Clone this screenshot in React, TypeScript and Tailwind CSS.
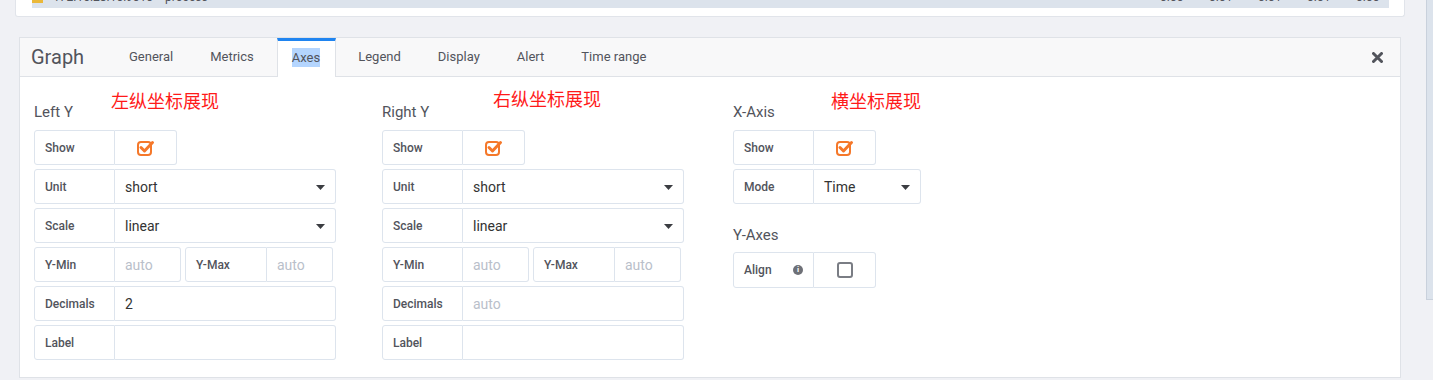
import React from "react";

const FONT = { fontFamily: "Roboto, 'Noto Sans CJK SC', sans-serif" };

function Check() {
  return (
    <svg width="20" height="18" viewBox="0 0 20 18">
      <rect x="2" y="3" width="13" height="13" rx="3" fill="none" stroke="#f5782a" strokeWidth="2" />
      <path d="M5 8.5 L8.5 12 L16.5 3.5" fill="none" stroke="#f5782a" strokeWidth="3" strokeLinecap="round" strokeLinejoin="round" />
    </svg>
  );
}

function Caret() {
  return (
    <svg width="9" height="5" viewBox="0 0 9 5">
      <path d="M0 0 L9 0 L4.5 5 Z" fill="#3b3d42" />
    </svg>
  );
}

function Label({ children, w = "w-[81px]" }: { children: React.ReactNode; w?: string }) {
  return (
    <div className={`${w} h-full shrink-0 border border-[#dde4ed] rounded-l-[3px] flex items-center pl-[10px] text-[12px] font-medium text-[#52545c]`}>
      {children}
    </div>
  );
}

function ShowRow() {
  return (
    <div className="flex h-[35px] w-[143px] mb-[4px]">
      <Label>Show</Label>
      <div className="flex-1 h-full border-y border-r border-[#dde4ed] rounded-r-[3px] flex items-center justify-center">
        <Check />
      </div>
    </div>
  );
}

function SelectRow({ label, value, w }: { label: string; value: string; w: string }) {
  return (
    <div className={`flex h-[35px] ${w} mb-[4px]`}>
      <Label>{label}</Label>
      <div className="flex-1 h-full border-y border-r border-[#dde4ed] rounded-r-[3px] flex items-center pl-[10px] pr-[10px] pt-[1px] justify-between text-[14px] text-[#333]">
        <span>{value}</span>
        <Caret />
      </div>
    </div>
  );
}

function InputRow({ label, value, placeholder }: { label: string; value?: string; placeholder?: string }) {
  return (
    <div className="flex h-[35px] w-[302px] mb-[4px]">
      <Label>{label}</Label>
      <div className="flex-1 h-full border-y border-r border-[#dde4ed] rounded-r-[3px] flex items-center pl-[10px] pt-[1px] text-[14px]">
        {value ? <span className="text-[#333]">{value}</span> : placeholder ? <span className="text-[#b9c0ca]">{placeholder}</span> : null}
      </div>
    </div>
  );
}

function MinMaxRow() {
  return (
    <div className="flex h-[35px] w-[302px] mb-[4px] gap-[4px]">
      <div className="flex h-full w-[147px]">
        <Label>Y-Min</Label>
        <div className="flex-1 h-full border-y border-r border-[#dde4ed] rounded-r-[3px] flex items-center pl-[10px] pt-[1px] text-[14px] text-[#b9c0ca]">auto</div>
      </div>
      <div className="flex h-full w-[148px]">
        <Label w="w-[82px]">Y-Max</Label>
        <div className="flex-1 h-full border-y border-r border-[#dde4ed] rounded-r-[3px] flex items-center pl-[10px] pt-[1px] text-[14px] text-[#b9c0ca]">auto</div>
      </div>
    </div>
  );
}

function Heading({ title, note, w, noteMt }: { title: string; note: string; w: string; noteMt: string }) {
  return (
    <div className="flex h-[53px]">
      <div className={`${w} shrink-0 pt-[26px] text-[15px] leading-[18px] text-[#52545c]`}>{title}</div>
      <div className={`${noteMt} text-[18px] leading-[24px] text-[#ff1a1a]`}>{note}</div>
    </div>
  );
}

export default function App() {
  const tabs = ["General", "Metrics", "Axes", "Legend", "Display", "Alert", "Time range"];
  return (
    <div style={FONT} className="w-[1433px] h-[380px] bg-[#f0f1f5] overflow-hidden flex">
      <div className="w-[1426px] shrink-0">
        {/* top panel remnant */}
        <div className="ml-[15px] w-[1390px] h-[17px] bg-white border-b border-x border-[#e1e4ea] rounded-b-[3px] overflow-hidden">
          <div className="mt-[-14px] ml-[16px] w-[1357px] h-[22px] bg-[#dce3ec] flex items-center text-[12px] leading-[14px] text-[#52545c]">
            <span className="w-[11px] h-[11px] bg-[#eab839] mr-[10px]" />
            <span className="mr-[12px]">172.16.28.10:9010</span>
            <span>process</span>
            <div className="flex-1" />
            <span className="w-[49px]">0.00</span>
            <span className="w-[49px]">0.01</span>
            <span className="w-[49px]">0.01</span>
            <span className="w-[49px]">0.01</span>
            <span className="w-[33px]">0.00</span>
          </div>
        </div>

        {/* editor */}
        <div className="mt-[20px] ml-[19px] w-[1382px] border border-[#dfe2e7] bg-white">
          <div className="h-[39px] bg-[#f8f8f9] border-b border-[#dfe2e7] flex items-end pl-[11px] pr-[17px]">
            <div className="self-center text-[20px] text-[#52545c] w-[83px]">Graph</div>
            <div className="flex gap-[7px] h-full items-end">
              {tabs.map((t) =>
                t === "Axes" ? (
                  <div key={t} className="h-[39px] mb-[-1px] ml-[1px] bg-white border-x border-[#dfe2e7] border-t-[3px] border-t-[#1f84f0] pl-[14px] pr-[15px] pb-[3px] flex items-center text-[13px] text-[#52545c]">
                    <span className="bg-[#b4d5fe] leading-[19px]">{t}</span>
                  </div>
                ) : (
                  <div key={t} className="h-[39px] border-x border-transparent px-[14px] flex items-center text-[13px] text-[#52545c]">
                    {t}
                  </div>
                )
              )}
            </div>
            <div className="flex-1" />
            <div className="self-center">
              <svg width="11" height="11" viewBox="0 0 11 11">
                <path d="M1.5 1.5 L9.5 9.5 M9.5 1.5 L1.5 9.5" stroke="#52545c" strokeWidth="3" strokeLinecap="round" />
              </svg>
            </div>
          </div>

          <div className="flex pl-[14px] pb-[13px]">
            <div className="w-[348px]">
              <Heading title="Left Y" note="左纵坐标展现" w="w-[77px]" noteMt="mt-[13px]" />
              <ShowRow />
              <SelectRow label="Unit" value="short" w="w-[302px]" />
              <SelectRow label="Scale" value="linear" w="w-[302px]" />
              <MinMaxRow />
              <InputRow label="Decimals" value="2" />
              <InputRow label="Label" />
            </div>
            <div className="w-[351px]">
              <Heading title="Right Y" note="右纵坐标展现" w="w-[111px]" noteMt="mt-[11px]" />
              <ShowRow />
              <SelectRow label="Unit" value="short" w="w-[302px]" />
              <SelectRow label="Scale" value="linear" w="w-[302px]" />
              <MinMaxRow />
              <InputRow label="Decimals" placeholder="auto" />
              <InputRow label="Label" />
            </div>
            <div className="flex-1">
              <Heading title="X-Axis" note="横坐标展现" w="w-[98px]" noteMt="mt-[13px]" />
              <ShowRow />
              <SelectRow label="Mode" value="Time" w="w-[188px]" />
              <div className="pt-[18px] pb-[8px] text-[15px] leading-[18px] text-[#52545c]">Y-Axes</div>
              <div className="flex h-[36px] w-[143px]">
                <Label>
                  <span className="flex-1">Align</span>
                  <span className="mr-[10px] w-[10px] h-[10px] rounded-full bg-[#6e7077] text-white text-[8px] font-bold leading-[10px] text-center">i</span>
                </Label>
                <div className="flex-1 h-full border-y border-r border-[#dde4ed] rounded-r-[3px] flex items-center justify-center">
                  <div className="w-[16px] h-[16px] rounded-[3px] border-2 border-[#7a7d84]" />
                </div>
              </div>
            </div>
          </div>
        </div>
      </div>
      <div className="w-[7px] h-[300px] bg-[#dce3ec] border-l border-b border-[#c9d1dc]" />
    </div>
  );
}
